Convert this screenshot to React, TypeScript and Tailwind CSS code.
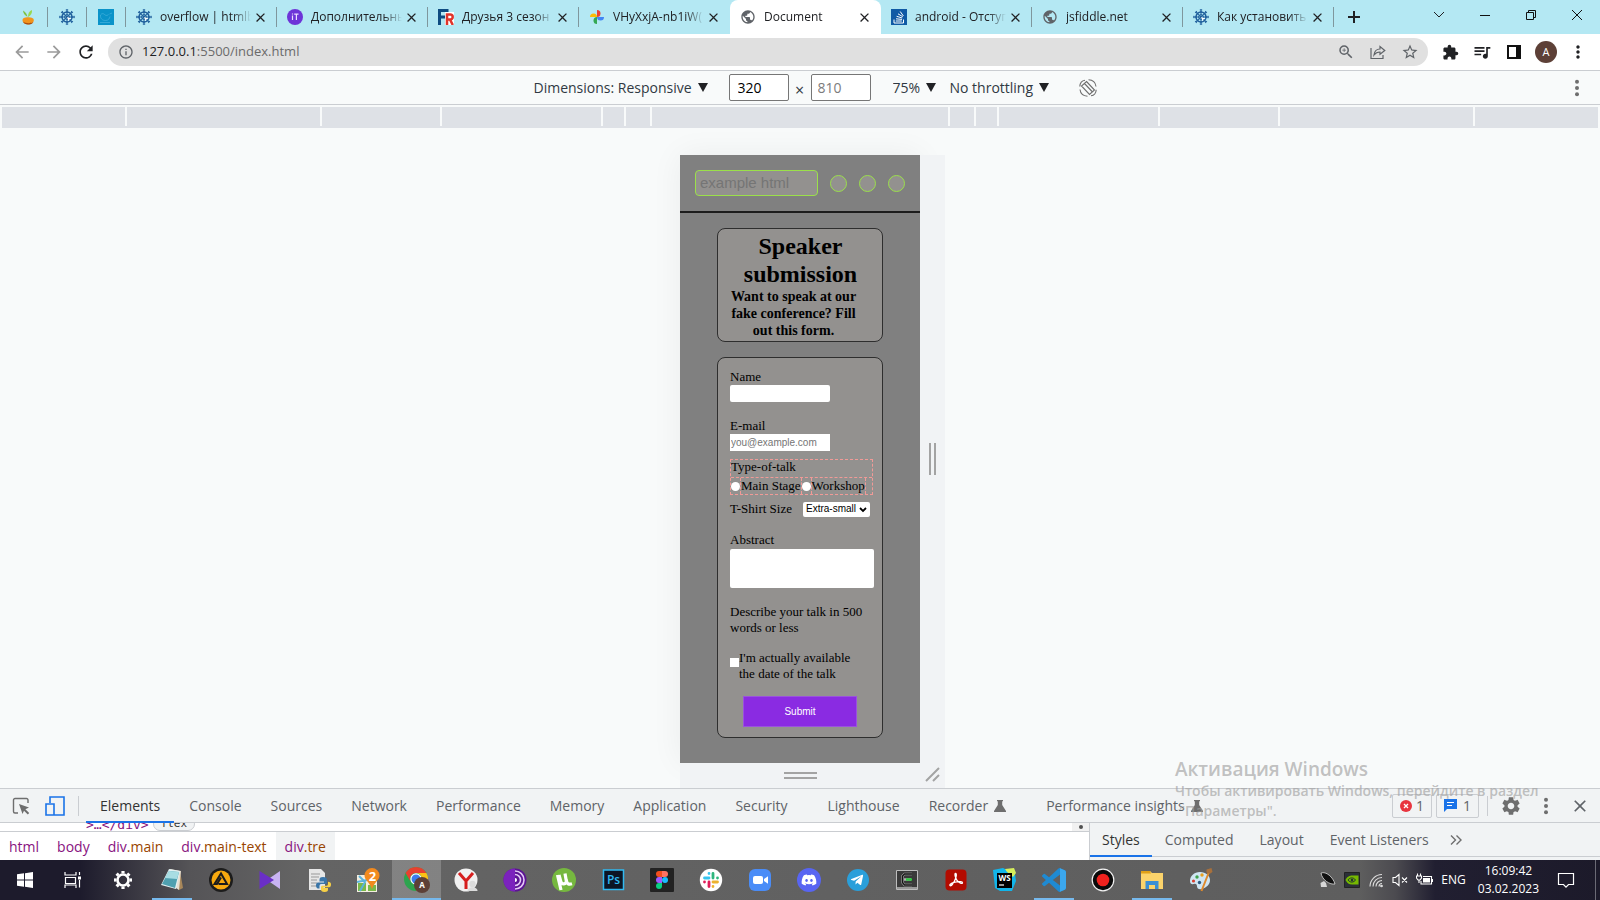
import type { ReactNode } from "react";
import {
  MdArrowBack,
  MdArrowForward,
  MdClose,
  MdExtension,
  MdInfoOutline,
  MdMoreVert,
  MdPublic,
  MdQueueMusic,
  MdRefresh,
  MdSettings,
  MdStarBorder,
  MdZoomIn,
} from "react-icons/md";
import { FaDiscord, FaTelegramPlane } from "react-icons/fa";

/* ---------- favicons ---------- */

function Sprout() {
  return (
    <svg viewBox="0 0 16 16" className="size-4">
      <path d="M7.500 9C7.500 6 6 3 3 1.500 3.200 4.500 5 6.500 7 7.500z" fill="#7fc241" />
      <path d="M8 8c0-3.500 1.200-6 4-7 .3 3-1 5.500-4 7z" fill="#9ad84f" />
      <path d="M2.500 11.300c0-2.300 2.500-3 5.500-3s5.800.7 5.800 3-2.800 4.200-5.800 4.200-5.500-1.900-5.500-4.200z" fill="#f2941c" />
      <path d="M3 12.800c2 1.500 8 2 10.300.2-.8 1.800-2.800 2.600-5.300 2.600s-4.300-1.200-5-2.800z" fill="#a94d10" />
    </svg>
  );
}

function Helm() {
  const spokes = [0, 45, 90, 135, 180, 225, 270, 315];
  return (
    <svg viewBox="0 0 16 16" className="size-4" fill="none" stroke="#1f5f9c">
      <circle cx="8" cy="8" r="5" strokeWidth="1.500" />
      <circle cx="8" cy="8" r="2.400" strokeWidth="1" />
      {spokes.map((a) => (
        <path key={a} d="M8 8V.4M6.800 .9h2.400M7 3h2" strokeWidth="1" transform={`rotate(${a} 8 8)`} />
      ))}
      <path d="M8 8l4.500 1.500-2 .8-.7 2z" fill="#fff" stroke="none" />
    </svg>
  );
}

function Whale() {
  return (
    <svg viewBox="0 0 16 16" className="size-4">
      <path fill="#0a93c9" d="M0 0h16v16H0z" />
      <path d="M2.500 6c-.5 3.500 2 5.500 5 5.500s4-2 4.500-4M2.500 6c1.500-2 3-1.500 4-.5S9 7 10.500 5.500M11.500 5l2.500-1M2 13.500h10" fill="none" stroke="#45b2dc" strokeWidth=".7" />
    </svg>
  );
}

function ItBadge() {
  return (
    <svg viewBox="0 0 16 16" className="size-4">
      <circle cx="8" cy="8" r="8" fill="#6d34d8" />
      <path d="M5.500 6.500V11M5.500 4.500v1M7.200 5.200h4.300M9.400 5.200V11" stroke="#e9dcff" strokeWidth="1.200" />
    </svg>
  );
}

function FrBadge() {
  return (
    <svg viewBox="0 0 16 16" className="size-4">
      <path fill="#fff" d="M7 3h9v13H7z" />
      <path d="M1.500 16V1.500H10.500M1.500 8H7" fill="none" stroke="#0f4c81" strokeWidth="3" />
      <path d="M9 16V5.500h3.200a2.300 2.300 0 0 1 0 5H9M12 10.500l2.800 5.500" fill="none" stroke="#e0342b" strokeWidth="2.500" />
    </svg>
  );
}

function Photos() {
  return (
    <svg viewBox="0 0 16 16" className="size-4">
      <path d="M8 1a3.500 3.500 0 0 1 0 7z" fill="#ea4335" />
      <path d="M1 8a3.500 3.500 0 0 1 7 0z" fill="#fbbc04" />
      <path d="M15 8a3.500 3.500 0 0 1-7 0z" fill="#4285f4" />
      <path d="M8 15a3.500 3.500 0 0 1 0-7z" fill="#34a853" />
    </svg>
  );
}

function StackBadge() {
  return (
    <svg viewBox="0 0 16 16" className="size-4">
      <path fill="#0f5aa5" d="M0 0h16v16H0z" />
      <path d="M3 10.500V14h9.500v-3.500M4.800 12h6M5 9.800l6 .6M5.600 7.300l5.600 1.700M7 4.800l4.800 3M9.200 2.500l3.200 4.500" fill="none" stroke="#fff" strokeWidth="1" />
    </svg>
  );
}

function Globe() {
  return <MdPublic className="size-4 text-[#5f6368]" />;
}

/* ---------- browser chrome ---------- */

type Tab = { icon: ReactNode; title: string; active?: boolean; divider?: boolean };

const pinned: { icon: ReactNode; name: string; first?: boolean }[] = [
  { icon: <Sprout />, name: "Sprout", first: true },
  { icon: <Helm />, name: "htmlbook" },
  { icon: <Whale />, name: "Whale" },
];

const tabs: Tab[] = [
  { icon: <Helm />, title: "overflow | htmlb", divider: true },
  { icon: <ItBadge />, title: "Дополнительны", divider: true },
  { icon: <FrBadge />, title: "Друзья 3 сезон", divider: true },
  { icon: <Photos />, title: "VHyXxjA-nb1iW(" },
  { icon: <Globe />, title: "Document", active: true },
  { icon: <StackBadge />, title: "android - Отступ", divider: true },
  { icon: <Globe />, title: "jsfiddle.net", divider: true },
  { icon: <Helm />, title: "Как установить", divider: true },
];

function TabStrip() {
  return (
    <header className="flex h-[34px] bg-[#b4e8f3] text-[#202124]">
      {pinned.map((p) => (
        <button
          key={p.name}
          aria-label={p.name}
          className={`flex shrink-0 items-center justify-end pr-3 ${p.first ? "w-12" : "w-[39px]"}`}
        >
          {p.icon}
          <span className="-mr-3 ml-[11px] h-5 w-px bg-[#7f979d]" />
        </button>
      ))}
      {tabs.map((t) => (
        <div
          key={t.title}
          className={`flex h-full w-[151px] min-w-0 items-center pl-[10px] ${t.active ? "rounded-t-lg bg-white" : ""}`}
        >
          <button className="flex min-w-0 flex-1 items-center gap-2 text-left">
            <span className="shrink-0">{t.icon}</span>
            <span className="w-[91px] overflow-hidden text-xs whitespace-nowrap [mask-image:linear-gradient(to_right,black_80%,transparent)]">
              {t.title}
            </span>
          </button>
          <button aria-label={`Close ${t.title}`} className="mr-2 shrink-0">
            <MdClose className="size-[15px]" />
          </button>
          <span className={`h-5 w-px shrink-0 ${t.divider ? "bg-[#7f979d]" : ""}`} />
        </div>
      ))}
      <button aria-label="New tab" className="ml-[14px] flex items-center">
        <svg viewBox="0 0 12 12" className="size-3" stroke="#202124" strokeWidth="2">
          <path d="M6 0v12M0 6h12" />
        </svg>
      </button>
      <div className="ml-auto flex h-[29px] items-center" role="group" aria-label="Window">
        <button aria-label="Search tabs" className="flex w-[46px] justify-center">
          <svg viewBox="0 0 12 12" className="size-3" fill="none" stroke="#202124">
            <path d="M1 3l5 5 5-5" />
          </svg>
        </button>
        <button aria-label="Minimize" className="flex w-[46px] justify-center">
          <svg viewBox="0 0 12 12" className="size-3" fill="none" stroke="#111">
            <path d="M1 6.500h10" />
          </svg>
        </button>
        <button aria-label="Restore" className="flex w-[46px] justify-center">
          <svg viewBox="0 0 12 12" className="size-3" fill="none" stroke="#111">
            <path d="M1.500 3.500h7v7h-7zM3.500 3.500v-2h7v7h-2" />
          </svg>
        </button>
        <button aria-label="Close window" className="flex w-[46px] justify-center">
          <svg viewBox="0 0 12 12" className="size-3" fill="none" stroke="#111">
            <path d="M1 1l10 10M11 1L1 11" />
          </svg>
        </button>
      </div>
    </header>
  );
}

function IconCell({ label, children }: { label: string; children: ReactNode }) {
  return (
    <button aria-label={label} className="flex w-8 shrink-0 items-center justify-center">
      {children}
    </button>
  );
}

function AddressBar() {
  return (
    <div className="flex h-9 items-center bg-white pl-[6px] text-[#202124]">
      <IconCell label="Back">
        <MdArrowBack className="size-5 text-[#9b9b9b]" />
      </IconCell>
      <IconCell label="Forward">
        <MdArrowForward className="size-5 text-[#9b9b9b]" />
      </IconCell>
      <IconCell label="Reload">
        <MdRefresh className="size-5" />
      </IconCell>
      <div className="ml-[6px] flex h-7 flex-1 items-center rounded-full bg-[#e0e0e0] pr-[2px] pl-[10px] text-[#5f6368]">
        <MdInfoOutline className="size-4" />
        <a href="http://127.0.0.1:5500/index.html" className="ml-2 flex-1 text-[13px] text-[#6b6b6b]">
          <span className="text-[#202124]">127.0.0.1</span>:5500/index.html
        </a>
        <IconCell label="Zoom">
          <MdZoomIn className="size-[18px]" />
        </IconCell>
        <IconCell label="Share">
          <svg viewBox="0 0 16 16" className="size-4" fill="none" stroke="currentColor" strokeWidth="1.200">
            <path d="M1 4v10.500h12V11M4 11c.5-4 2.500-6 6-6V2.500L14.800 6.500 10 10.300V8C7 8 5.500 9 4 11z" />
          </svg>
        </IconCell>
        <IconCell label="Bookmark">
          <MdStarBorder className="size-[18px]" />
        </IconCell>
      </div>
      <div className="flex pr-[6px] pl-[6px]">
        <IconCell label="Extensions">
          <MdExtension className="size-[17px]" />
        </IconCell>
        <IconCell label="Media">
          <MdQueueMusic className="size-5" />
        </IconCell>
        <IconCell label="Side panel">
          <svg viewBox="0 0 14 14" className="size-[14px]">
            <path d="M1 1h12v12H1z" fill="none" stroke="#111" strokeWidth="2" />
            <path d="M9 1h4v12H9z" fill="#111" />
          </svg>
        </IconCell>
        <IconCell label="Profile">
          <span className="flex size-[22px] items-center justify-center rounded-full bg-[#5d4037] text-[11px] text-white">A</span>
        </IconCell>
        <IconCell label="Menu">
          <MdMoreVert className="size-5" />
        </IconCell>
      </div>
    </div>
  );
}

/* ---------- responsive toolbar ---------- */

function Picker({ label, value }: { label: string; value: string }) {
  return (
    <span className="relative flex items-center">
      <select aria-label={label} className="appearance-none bg-transparent pr-[15px] outline-none">
        <option>{value}</option>
      </select>
      <svg viewBox="0 0 10 9" className="pointer-events-none absolute right-0 h-[9px] w-[10px]" fill="#202124">
        <path d="M0 0h10L5 9z" />
      </svg>
    </span>
  );
}

function DeviceToolbar() {
  return (
    <div className="flex h-[35px] items-center border-y border-[#cacdd1] bg-[#f8fafa] text-sm text-[#303942]">
      <div className="flex flex-1 items-center justify-center pl-[63px]">
        <Picker label="Device" value="Dimensions: Responsive" />
        <input
          aria-label="Width"
          defaultValue="320"
          className="ml-[21px] h-[27px] w-[60px] rounded-xs border border-[#767676] bg-white px-2 text-black outline-none"
        />
        <span className="w-[22px] pt-1 text-center text-base">×</span>
        <input
          aria-label="Height"
          placeholder="810"
          className="mr-[22px] h-[27px] w-[60px] rounded-xs border border-[#767676] bg-white px-[6px] placeholder:text-[#7c7c7c] outline-none"
        />
        <Picker label="Zoom level" value="75%" />
        <span className="w-[14px]" />
        <Picker label="Throttling" value="No throttling" />
        <button aria-label="Rotate" className="ml-[30px]">
          <svg viewBox="0 0 18 18" className="size-[18px]" fill="none" stroke="#6e6e6e" strokeWidth="1.100">
            <path d="M7.500 2.500l8 8.500-5 4.500-8-8.500zM6 1.200C3 1.500 1 4 .8 7.500M9.500 .8C13.500 1 16.500 3.500 17 7.500M12 16.800c3-.3 5-2.500 5.200-6M8.500 17.200C4.500 17 1.500 14.500 1 10.500M5.500 4.500l8 8.500" />
          </svg>
        </button>
      </div>
      <button aria-label="More options" className="mr-[13px]">
        <svg viewBox="0 0 20 20" className="size-5" fill="#6e6e6e">
          <circle cx="10" cy="3.800" r="2" />
          <circle cx="10" cy="10" r="2" />
          <circle cx="10" cy="16.200" r="2" />
        </svg>
      </button>
    </div>
  );
}

function Ruler() {
  const bar = "h-[19px] bg-[#dee1e6]";
  return (
    <div className="bg-[#f8fafa] px-[2px] pt-[2px]">
      <div className="flex gap-[2px] border-b-2 border-[#dee1e6]">
        <div className={`${bar} flex-1`} />
        <div className={`${bar} w-[193px]`} />
        <div className={`${bar} w-[118px]`} />
        <div className={`${bar} w-[159px]`} />
        <div className={`${bar} w-[21px]`} />
        <div className={`${bar} w-[24px]`} />
        <div className={`${bar} w-[296px]`} />
        <div className={`${bar} w-[24px]`} />
        <div className={`${bar} w-[21px]`} />
        <div className={`${bar} w-[159px]`} />
        <div className={`${bar} w-[118px]`} />
        <div className={`${bar} w-[193px]`} />
        <div className={`${bar} flex-1`} />
      </div>
    </div>
  );
}

/* ---------- page shown inside the device frame ---------- */

function ConferencePage() {
  const card = "rounded-lg border border-[#2e2e2e] bg-[#93918f]";
  return (
    <div className="w-[240px] bg-[#808080] pb-[25px] font-['Liberation_Serif',serif] text-black">
      <div className="flex h-[58px] items-center gap-3 border-b-2 border-[#1c1c1c] px-[15px]">
        <input
          aria-label="Site"
          placeholder="example html"
          className="h-[26px] w-[123px] rounded border border-[#9be04a] bg-[#93918f] px-1 pb-px font-['Liberation_Sans',sans-serif] text-[15px] outline-none placeholder:text-[#757575]"
        />
        <span className="size-[17px] rounded-full border border-[#9be04a] bg-[#93918f]" />
        <span className="size-[17px] rounded-full border border-[#9be04a] bg-[#93918f]" />
        <span className="size-[17px] rounded-full border border-[#9be04a] bg-[#93918f]" />
      </div>

      <section className={`${card} mx-[37px] mt-[15px] pt-[3px] pr-[25px] pb-[2px] pl-3 text-center`}>
        <h1 className="-mr-[14px] text-2xl leading-7 font-bold">
          Speaker
          <br />
          submission
        </h1>
        <p className="text-sm leading-[17px] font-bold whitespace-nowrap">
          Want to speak at our
          <br />
          fake conference? Fill
          <br />
          out this form.
        </p>
      </section>

      <form
        className={`${card} mx-[37px] mt-[15px] flex flex-col pt-[11px] pr-2 pb-[10px] pl-3 text-[13px] leading-4`}
        onSubmit={(e) => e.preventDefault()}
      >
        <label htmlFor="name">Name</label>
        <input id="name" className="h-[17px] w-[100px] rounded-xs bg-white px-[2px] font-['Liberation_Sans',sans-serif] text-[10px] outline-none" />

        <label htmlFor="email" className="mt-4">
          E-mail
        </label>
        <input
          id="email"
          type="email"
          placeholder="you@example.com"
          className="h-[17px] w-[100px] bg-white px-px font-['Liberation_Sans',sans-serif] text-[10px] outline-none placeholder:text-[#757575]"
        />

        <fieldset aria-labelledby="talk-type" className="mt-2 h-9 w-[143px] border border-dashed border-[#f19a97]">
          <div id="talk-type" className="-mt-px h-[19px] border-b border-dashed border-[#f19a97]">
            Type-of-talk
          </div>
          <div className="flex items-center whitespace-nowrap">
            <input id="main" type="radio" name="talk" className="size-[9px] shrink-0 appearance-none rounded-full bg-white" />
            <label htmlFor="main" className="border-x border-dashed border-[#f19a97]">
              Main Stage
            </label>
            <input id="workshop" type="radio" name="talk" className="size-[9px] shrink-0 appearance-none rounded-full bg-white" />
            <label htmlFor="workshop" className="border-x border-dashed border-[#f19a97]">
              Workshop
            </label>
          </div>
        </fieldset>

        <div className="mt-[6px] flex items-center justify-between">
          <label htmlFor="size">T-Shirt Size</label>
          <span className="relative mr-1 flex">
            <select
              id="size"
              className="h-[15px] w-[67px] appearance-none rounded-xs bg-white pl-[3px] font-['Liberation_Sans',sans-serif] text-[10px] leading-3 outline-none"
            >
              <option>Extra-small</option>
            </select>
            <svg viewBox="0 0 8 6" className="pointer-events-none absolute top-[5px] right-[3px] h-[6px] w-2" fill="none" stroke="#000" strokeWidth="1.800">
              <path d="M1 1l3 3 3-3" />
            </svg>
          </span>
        </div>

        <label htmlFor="abstract" className="mt-[15px]">
          Abstract
        </label>
        <textarea id="abstract" className="mt-px h-[39px] w-full resize-none rounded-xs bg-white p-[2px] font-['Liberation_Sans',sans-serif] text-[10px] outline-none" />
        <p className="mt-4 whitespace-nowrap">
          Describe your talk in 500
          <br />
          words or less
        </p>

        <div className="mt-[14px] flex items-start">
          <input id="available" type="checkbox" className="mt-2 size-[9px] shrink-0 appearance-none bg-white" />
          <label htmlFor="available" className="whitespace-nowrap">
            I'm actually available
            <br />
            the date of the talk
          </label>
        </div>

        <button type="submit" className="mt-[14px] mr-[17px] ml-[13px] h-[31px] border border-[#9a52dd] bg-[#8a2be2] font-['Liberation_Sans',sans-serif] text-[10px] text-white">
          Submit
        </button>
      </form>
    </div>
  );
}

function Viewport() {
  return (
    <main className="flex flex-1 justify-center bg-[#f8fafa] pt-[27px]">
      <div className="ml-[25px] flex flex-col bg-[#f1f3f5]">
        <div className="flex">
          <div className="shadow-[0_0_30px_rgba(0,0,0,0.06)]">
            <ConferencePage />
          </div>
          <div className="relative flex w-[25px] items-center justify-center gap-[3px] bg-[#f1f3f5]">
            <span className="h-8 w-[2px] bg-[#a3a3a3]" />
            <span className="h-8 w-[2px] bg-[#a3a3a3]" />
          </div>
        </div>
        <div className="relative flex h-[25px] items-center bg-[#f1f3f5]">
          <div className="flex flex-1 flex-col items-center gap-[3px]">
            <span className="h-[2px] w-[33px] bg-[#a3a3a3]" />
            <span className="h-[2px] w-[33px] bg-[#a3a3a3]" />
          </div>
          <svg viewBox="0 0 25 25" className="size-[25px]" stroke="#a3a3a3" strokeWidth="2">
            <path d="M6 18L19 5M13 18l6-6" />
          </svg>
        </div>
      </div>
    </main>
  );
}

/* ---------- developer tools ---------- */

const panels = [
  { name: "Elements", active: true },
  { name: "Console" },
  { name: "Sources" },
  { name: "Network" },
  { name: "Performance" },
  { name: "Memory" },
  { name: "Application" },
  { name: "Security" },
  { name: "Lighthouse", gap: true },
  { name: "Recorder", flask: true },
  { name: "Performance insights", flask: true, gap: true },
];

const crumbs = [
  { tag: "html", cls: "" },
  { tag: "body", cls: "" },
  { tag: "div", cls: ".main" },
  { tag: "div", cls: ".main-text" },
  { tag: "div", cls: ".tre" },
];

function DevTools() {
  return (
    <section className="text-sm text-[#5f6368]">
      <div className="flex h-[35px] items-center border-y border-[#cacdd1] bg-[#f1f3f4]">
        <button aria-label="Inspect" className="ml-3">
          <svg viewBox="0 0 18 18" className="size-[18px]">
            <path d="M16 6V3a1.500 1.500 0 0 0-1.500-1.500H3A1.500 1.500 0 0 0 1.500 3v11.500A1.500 1.500 0 0 0 3 16h3" fill="none" stroke="#6e6e6e" strokeWidth="1.400" />
            <path d="M7 7l10 3.600-3.600 1.700 3.800 3.800-1.400 1.400-3.800-3.800L10.500 17z" fill="#6e6e6e" />
          </svg>
        </button>
        <button aria-label="Toggle device toolbar" className="ml-[15px]">
          <svg viewBox="0 0 20 20" className="size-5" fill="none" stroke="#1a73e8" strokeWidth="1.600">
            <path d="M5 7V1h14v18H9M1 8h8v11H1z" />
          </svg>
        </button>
        <span className="mr-[7px] ml-[13px] h-5 w-px bg-[#cacdd1]" />
        <nav className="flex self-stretch">
          {panels.map((p) => (
            <button
              key={p.name}
              className={`flex items-center gap-[6px] pr-[14px] pt-px whitespace-nowrap ${
                p.active ? "-mb-px border-b-2 border-[#1a73e8] text-[#333]" : "ml-px"
              } ${p.gap ? "pl-[25px]" : "pl-[14px]"}`}
            >
              {p.name}
              {p.flask && (
                <svg viewBox="0 0 12 12" className="size-3" fill="#6e6e6e">
                  <path d="M3 0h6v1.300H8.200V5L12 11v1H0v-1l3.800-6V1.300H3z" />
                </svg>
              )}
            </button>
          ))}
        </nav>
        <div className="ml-auto flex items-center">
          <button className="flex h-6 items-center gap-1 rounded-xs border border-[#cacdd1] px-[7px]">
            <svg viewBox="0 0 12 12" className="size-3">
              <circle cx="6" cy="6" r="6" fill="#e8353f" />
              <path d="M4 4l4 4M8 4L4 8" stroke="#fff" strokeWidth="1.300" />
            </svg>
            1
          </button>
          <button className="ml-1 flex h-6 items-center gap-[6px] rounded-xs border border-[#cacdd1] px-[7px]">
            <svg viewBox="0 0 13 13" className="size-[13px]">
              <path d="M0 0h13v10H3l-3 3z" fill="#1a73e8" />
              <path d="M3 3.500h7M3 6.500h5" stroke="#fff" strokeWidth="1.200" />
            </svg>
            1
          </button>
          <span className="ml-2 h-5 w-px bg-[#cacdd1]" />
          <button aria-label="Settings" className="ml-3">
            <MdSettings className="size-[22px] text-[#6e6e6e]" />
          </button>
          <button aria-label="Customize" className="ml-[14px]">
            <svg viewBox="0 0 20 20" className="size-5" fill="#6e6e6e">
              <circle cx="10" cy="3.800" r="2" />
              <circle cx="10" cy="10" r="2" />
              <circle cx="10" cy="16.200" r="2" />
            </svg>
          </button>
          <button aria-label="Close tools" className="mr-[10px] ml-[14px]">
            <MdClose className="size-5 text-[#5f6368]" />
          </button>
        </div>
      </div>

      <div className="flex h-[37px] bg-white">
        <div className="flex min-w-0 flex-1 flex-col">
          <div className="flex h-[9px] items-end justify-between overflow-hidden border-b border-[#cacdd1]">
            <div className="flex items-end pl-[86px] font-['DejaVu_Sans_Mono',monospace] text-[13px] leading-[12px] text-[#881280]">
              {">…</div>"}
              <span className="ml-[4px] rounded-full border border-[#cacdd1] bg-[#f1f3f4] px-[7px] text-[11px] leading-3 text-[#333]">flex</span>
            </div>
            <div className="flex h-full w-[17px] items-center justify-center bg-[#f1f1f1]">
              <span className="size-1 rounded-full bg-[#505050]" />
            </div>
          </div>
          <nav className="flex flex-1 items-stretch">
            {crumbs.map((c) => (
              <a key={c.cls + c.tag} href={`#${c.tag}`} className="flex items-center px-[9px] pt-[2px] text-[#994500] last:bg-[#f1f3f4]">
                <span className="text-[#881280]">{c.tag}</span>
                {c.cls}
              </a>
            ))}
          </nav>
        </div>
        <aside className="w-[511px] border-l border-[#cacdd1] bg-[#f1f3f4]">
          <nav className="flex h-[34px] items-stretch border-b border-[#cacdd1]">
            <button className="-mb-px border-b-2 border-[#1a73e8] px-3 pt-[2px] text-[#333]">Styles</button>
            <button className="px-[13px]">Computed</button>
            <button className="px-[13px]">Layout</button>
            <button className="px-[13px]">Event Listeners</button>
            <button aria-label="More panes" className="px-2">
              <svg viewBox="0 0 12 12" className="size-3" fill="none" stroke="#6e6e6e" strokeWidth="1.400">
                <path d="M1 1.500L5.500 6 1 10.500M6.500 1.500L11 6l-4.500 4.500" />
              </svg>
            </button>
          </nav>
        </aside>
      </div>
    </section>
  );
}

/* ---------- taskbar ---------- */

const S = "size-6";

const apps: { name: string; icon: ReactNode; state?: "open" | "front" }[] = [
  {
    name: "Start",
    icon: (
      <svg viewBox="0 0 24 24" className={S} fill="#fff">
        <path d="M4 6.300l7-1v6.300H4zM12 5.200L20 4v7.600h-8zM4 12.500h7v6.300l-7-1zM12 12.500h8V20l-8-1.200z" />
      </svg>
    ),
  },
  {
    name: "Task view",
    icon: (
      <svg viewBox="0 0 24 24" className={S} fill="none" stroke="#fff" strokeWidth="1.200">
        <path d="M3 4v3h11V4M3.500 9.500h10v6h-10zM3 20v-3h11v3M17.500 4v3M17.500 12v7.500" />
        <path d="M16 8.500h3v3h-3z" fill="#fff" stroke="none" />
      </svg>
    ),
  },
  {
    name: "Settings",
    icon: (
      <svg viewBox="0 0 24 24" className={S} fill="none" stroke="#fff">
        <circle cx="12" cy="12" r="5.500" strokeWidth="2.600" />
        {[0, 45, 90, 135, 180, 225, 270, 315].map((a) => (
          <path key={a} d="M12 5.500V3" strokeWidth="3.200" transform={`rotate(${a} 12 12)`} />
        ))}
      </svg>
    ),
  },
  {
    name: "Notepad",
    state: "open",
    icon: (
      <svg viewBox="0 0 24 24" className={S}>
        <path d="M20 3l3 17-4 2-2-3z" fill="#a8875a" />
        <path d="M10 1l11 2-2 19-3-2z" fill="#e6ded0" />
        <path d="M9 1l11 2-4 18L1 17z" fill="#e3f1f3" />
        <path d="M9 3l10 1-4 16-13-4z" fill="#4fa0b0" />
        <path d="M9 3l10 1-2 7-12-1z" fill="#a8dde3" />
      </svg>
    ),
  },
  {
    name: "AIMP",
    icon: (
      <svg viewBox="0 0 24 24" className={S}>
        <circle cx="12" cy="12" r="12" fill="#1c1c1c" />
        <circle cx="12" cy="12" r="9.500" fill="#f7a90f" />
        <path d="M9.500 16H18L12 5.500 5.500 16H8L12 9.500" fill="none" stroke="#1c1c1c" strokeWidth="2" />
      </svg>
    ),
  },
  {
    name: "Kdenlive",
    icon: (
      <svg viewBox="0 0 24 24" className={S}>
        <path d="M22 3v18L9 12z" fill="#c8b3f2" />
        <path d="M1.500 3l14.500 9-14.500 9z" fill="#6a2fc7" />
      </svg>
    ),
  },
  {
    name: "Python",
    icon: (
      <svg viewBox="0 0 24 24" className={S}>
        <path d="M2 1h12l4 4v17H2z" fill="#e6e6e6" />
        <path d="M4 6h9M4 9h8M4 12h6M4 15h6M4 18h7" stroke="#999" />
        <path d="M16 9c-3 0-3.500 1-3.500 3v1.500H17v1h-6c-1.500 0-2 1.500-2 3s.8 3 2 3h1.500V18c0-1.500 1-2 2-2h4c1 0 1.500-.8 1.500-1.500V12c0-2-1-3-4-3z" fill="#3b76a8" />
        <path d="M17.500 24c3 0 3.500-1 3.500-2.500V20h-4.500v-.8H22c1.500 0 2-1.200 2-2.700 0-1.800-1-2.700-3-2.700V16c0 1.300-1 1.800-2 1.800h-3.500c-1 0-1.500.7-1.500 1.500V21.500c0 1.500 1 2.500 3.500 2.500z" fill="#f7d046" />
      </svg>
    ),
  },
  {
    name: "2GIS",
    icon: (
      <svg viewBox="0 0 24 24" className={S}>
        <path d="M1 7h20v17H1z" fill="#f3eee0" />
        <path d="M2 15h8v8H2zM12 17h8v6h-8z" fill="#7bb84a" />
        <path d="M3 8l6 6-5 9M1 14l10-2" stroke="#5ab3dd" strokeWidth="2" fill="none" />
        <path d="M16 0a7.500 7.500 0 0 1 7.500 7.500C23.500 12 19 13 16 21 13 13 8.500 12 8.500 7.500A7.500 7.500 0 0 1 16 0z" fill="#f28a1e" />
        <text x="16.500" y="12.500" textAnchor="middle" fontSize="13" fontWeight="700" fill="#fff">2</text>
      </svg>
    ),
  },
  {
    name: "Chrome",
    state: "front",
    icon: (
      <svg viewBox="0 0 26 26" className="size-[26px]">
        <circle cx="12" cy="12" r="12" fill="#2da44e" />
        <path d="M12 0A12 12 0 0 1 22.400 6H12a6 6 0 0 0-5.200 9L1.600 6A12 12 0 0 1 12 0z" fill="#e8402f" />
        <path d="M22.400 6A12 12 0 0 1 12 24l5.200-9A6 6 0 0 0 12 6z" fill="#fbc116" />
        <circle cx="12" cy="12" r="5.700" fill="#fff" />
        <circle cx="12" cy="12" r="4.500" fill="#3b7ded" />
        <circle cx="18" cy="18" r="8" fill="#5d4037" />
        <text x="18" y="21" textAnchor="middle" fontSize="8" fontWeight="700" fill="#fff">A</text>
      </svg>
    ),
  },
  {
    name: "Yandex",
    icon: (
      <svg viewBox="0 0 24 24" className={S}>
        <circle cx="12" cy="12" r="11.500" fill="#f1f1f1" />
        <path d="M5 5l7 8 7-8M12 12v9" fill="none" stroke="#d61f1f" strokeWidth="3" />
        <circle cx="18.500" cy="16" r="3.200" fill="#dcdcdc" />
        <path d="M13.500 23c0-5 10-5 10 0z" fill="#dcdcdc" />
      </svg>
    ),
  },
  {
    name: "Tor",
    icon: (
      <svg viewBox="0 0 24 24" className={S}>
        <circle cx="12" cy="12" r="11.500" fill="#5c1494" />
        <path d="M12 .5a11.500 11.500 0 0 0 0 23z" fill="#7b22bd" />
        <path d="M12 3a9 9 0 0 1 0 18M12 6.500a5.500 5.500 0 0 1 0 11" fill="none" stroke="#e3c8f5" strokeWidth="1.600" />
        <path d="M12 10a2 2 0 0 1 0 4z" fill="#fff" />
      </svg>
    ),
  },
  {
    name: "uTorrent",
    icon: (
      <svg viewBox="0 0 24 24" className={S}>
        <circle cx="12" cy="12" r="12" fill="#76b83f" />
        <path d="M5.500 7l3.500 15M7 7l1.800 6.500c1 3.500 5.500 3 5.500-.5L13 5.500M14.300 12c.5 4 2.500 4.800 5.700 3.800" fill="none" stroke="#fff" strokeWidth="3.200" />
      </svg>
    ),
  },
  {
    name: "Photoshop",
    icon: (
      <svg viewBox="0 0 24 24" className={S}>
        <path d="M2.500 2h20v19.500h-20z" fill="#0c1524" stroke="#31b9f0" strokeWidth="1.500" />
        <text x="12.500" y="16" textAnchor="middle" fontSize="12" fontWeight="600" fill="#31b9f0">Ps</text>
      </svg>
    ),
  },
  {
    name: "Figma",
    icon: (
      <svg viewBox="0 0 24 24" className={S}>
        <rect width="24" height="24" rx="1" fill="#222" />
        <path d="M12 3H9a3 3 0 0 0 0 6h3z" fill="#f24e1e" />
        <path d="M12 3h3a3 3 0 0 1 0 6h-3z" fill="#ff7262" />
        <path d="M12 9H9a3 3 0 0 0 0 6h3z" fill="#a259ff" />
        <circle cx="15" cy="12" r="3" fill="#1abcfe" />
        <path d="M12 15H9a3 3 0 1 0 3 3z" fill="#0acf83" />
      </svg>
    ),
  },
  {
    name: "Slack",
    icon: (
      <svg viewBox="0 0 24 24" className={S} strokeLinecap="round" strokeWidth="2.800">
        <circle cx="12" cy="12" r="11.200" fill="#fff" />
        <path d="M10 5.500v0M5.500 10H10" stroke="#36c5f0" />
        <path d="M14 5.500V10M18.500 10v0" stroke="#2eb67d" />
        <path d="M14 14h4.500M14 18.500v0" stroke="#ecb22e" />
        <path d="M10 14v4.500M5.500 14v0" stroke="#e01e5a" />
      </svg>
    ),
  },
  {
    name: "Zoom",
    icon: (
      <svg viewBox="0 0 24 24" className={S}>
        <rect x="1" y="1" width="22" height="22" rx="6" fill="#4a8cf7" />
        <rect x="5" y="8" width="10" height="8" rx="2" fill="#fff" />
        <path d="M16 11l4-2.800v7.600L16 13z" fill="#fff" />
      </svg>
    ),
  },
  {
    name: "Discord",
    icon: (
      <span className="flex size-6 items-center justify-center rounded-full bg-[#5865f2] text-white">
        <FaDiscord className="size-4" />
      </span>
    ),
  },
  {
    name: "Telegram",
    icon: (
      <span className="flex size-[22px] items-center justify-center rounded-full bg-[#2a9fda] text-white">
        <FaTelegramPlane className="mr-[2px] size-[14px]" />
      </span>
    ),
  },
  {
    name: "Console",
    icon: (
      <svg viewBox="0 0 24 24" className={S}>
        <path d="M1.500 2.500h21v19h-21z" fill="#3a3a3a" stroke="#bdbdbd" />
        <path d="M2 19h20v2H2z" fill="#999" />
        <path d="M17 6H9.500L7.500 8v6.500L9.500 17H17M9 11.500h7" fill="none" stroke="#b0b0b0" strokeWidth="2.400" />
        <path d="M17 6H9.500L7.500 8v6.500L9.500 17H17" fill="none" stroke="#151515" strokeWidth="1.400" />
        <path d="M11 11.500h6" stroke="#2ecc40" strokeWidth="2.400" />
      </svg>
    ),
  },
  {
    name: "Acrobat",
    icon: (
      <svg viewBox="0 0 24 24" className={S}>
        <rect x="1.500" y="1.500" width="21" height="21" rx="4" fill="#b30b00" />
        <path d="M11.500 5.500c1.500 0 .8 4-1 7.500-1.500 3-3.500 5.500-4.500 4.500-1-1.200 3-3.200 6.500-3.700 3-.5 6-.2 6 1 0 1.500-3.500.3-5.500-2.500-1.600-2.300-2.700-6.800-1.500-6.800z" fill="none" stroke="#fff" strokeWidth="1.300" />
      </svg>
    ),
  },
  {
    name: "WebStorm",
    icon: (
      <svg viewBox="0 0 24 24" className={S}>
        <path d="M0 2l10-2 6 3 6 3 1 7-4 10H7L2 20z" fill="#12b5ea" />
        <path d="M12 1l9-1 2 5-3 4-6-5z" fill="#d6ee5c" />
        <path d="M4 5h15v15H4z" fill="#000" />
        <text x="11.500" y="13" textAnchor="middle" fontSize="8" fontWeight="700" fill="#fff">WS</text>
        <path d="M6 17h5" stroke="#fff" strokeWidth="1.200" />
      </svg>
    ),
  },
  {
    name: "VS Code",
    state: "open",
    icon: (
      <svg viewBox="0 0 24 24" className={S}>
        <path
          fill="#1f8ad2"
          d="M23.150 2.587L18.210.210a1.494 1.494 0 0 0-1.705.290l-9.460 8.630-4.120-3.128a.999.999 0 0 0-1.276.057L.327 7.261A1 1 0 0 0 .326 8.740L3.899 12 .326 15.260a1 1 0 0 0 .001 1.479L1.650 17.940a.999.999 0 0 0 1.276.057l4.120-3.128 9.460 8.630a1.492 1.492 0 0 0 1.704.290l4.942-2.377A1.500 1.500 0 0 0 24 20.060V3.939a1.500 1.500 0 0 0-.850-1.352zm-5.146 14.861L10.826 12l7.178-5.448v10.896z"
        />
        <path d="M18 .2l5.200 2.400.8 1.400V20l-.8 1.400L18 23.800z" fill="#3ba7ee" />
      </svg>
    ),
  },
  {
    name: "Recorder",
    icon: (
      <svg viewBox="0 0 24 24" className={S}>
        <circle cx="12" cy="12" r="10.800" fill="#0a0a0a" stroke="#f2f2f2" strokeWidth="1.200" />
        <circle cx="12" cy="12" r="6.300" fill="#f0221e" />
      </svg>
    ),
  },
  {
    name: "Explorer",
    state: "open",
    icon: (
      <svg viewBox="0 0 24 24" className={S}>
        <path d="M1 3h9l2 2h11v16H1z" fill="#fbd36b" />
        <path d="M1 3h9l1 2.500H1z" fill="#e0a018" />
        <path d="M5.500 21v-8h13v8h-3.500v-4h-6v4z" fill="#3b8fd4" />
      </svg>
    ),
  },
  {
    name: "Paint",
    icon: (
      <svg viewBox="0 0 24 24" className={S}>
        <path d="M11 4C5 4 1 8 1 13c0 3 2 3.500 4 3s3 .5 3 2.500S10 22 13 21c5-1.500 8-5 8-9s-4-8-10-8z" fill="#cfe6f3" />
        <circle cx="4.500" cy="13" r="1.600" fill="#d8402f" />
        <circle cx="8" cy="9" r="1.700" fill="#3fa34d" />
        <circle cx="13" cy="7" r="1.700" fill="#e8a020" />
        <circle cx="10.500" cy="14.500" r="1.700" fill="#2d5a80" />
        <path d="M20 4L12.500 23" stroke="#e08a2c" strokeWidth="2" />
        <path d="M17.500 1.500L22.500 0l1 4-3 2-3-1.500z" fill="#a8703c" />
      </svg>
    ),
  },
];

function Taskbar() {
  return (
    <footer className="flex h-10 items-stretch bg-[linear-gradient(to_right,#1d1b2c_0,#1d1b2c_80px,#555457_190px,#646464_300px,#5e5e5e_calc(100%-240px),#4c4b50_calc(100%-205px),#211f31_calc(100%-165px),#1c1a2a_100%)] text-white">
      {apps.map((a) => (
        <button
          key={a.name}
          aria-label={a.name}
          className={`flex w-[49px] shrink-0 flex-col items-center ${a.state === "front" ? "bg-white/20" : ""}`}
        >
          <span className="flex flex-1 items-center pt-[2px]">{a.icon}</span>
          <span className={`h-[2px] ${a.state === "front" ? "w-full bg-[#76b9ed]" : a.state === "open" ? "w-10 bg-[#76b9ed]" : "w-10"}`} />
        </button>
      ))}
      <div className="ml-auto flex items-center gap-2">
        <svg viewBox="0 0 16 16" className="size-4">
          <path d="M1 1c5-2 12 4 14 11-5 1-13-4-14-11z" fill="#111" stroke="#ddd" strokeWidth=".8" />
          <path d="M4 9l-3.500 2L1 15h6l-1-4" fill="#d8d8d8" />
        </svg>
        <svg viewBox="0 0 16 16" className="size-4">
          <path d="M.5.500h15v15H.5z" fill="#2b3038" stroke="#222" />
          <path d="M1.500 8C3 4.500 6 3.500 8 3.500h6.500v9H8C5 12.500 3 11 1.500 8z" fill="#76b900" />
          <path d="M4 8c1.500-2.500 5.500-3 7.500 0-1.500 2.500-5.500 3-7.500 0z" fill="none" stroke="#233" />
          <circle cx="8" cy="8" r="1.300" fill="#233" />
        </svg>
        <svg viewBox="0 0 16 16" className="size-4" fill="none" stroke="#ddd" strokeWidth="1.100">
          <path d="M2 14.500A12 12 0 0 1 14 2.500M5 14.500A9 9 0 0 1 14 5.500M8 14.500a6 6 0 0 1 6-6M11 14.500a3 3 0 0 1 3-3" />
          <circle cx="13.500" cy="14" r=".8" fill="#fff" />
        </svg>
        <svg viewBox="0 0 16 16" className="size-4" fill="none" stroke="#fff" strokeWidth="1.100">
          <path d="M1 5.500h2.500L7 2.500v11L3.500 10.500H1zM10 5.500l5 5M15 5.500l-5 5" />
        </svg>
        <svg viewBox="0 0 17 16" className="h-4 w-[17px]" fill="none" stroke="#fff" strokeWidth="1.100">
          <path d="M7 4.500h8.500v7.500H5V9M16.500 7v3M1.500 1.500V4M4.500 1.500V4M.5 4h5v2L4 8H2L.5 6zM3 8v3" />
          <path d="M7 6h7v4.500H7z" fill="#fff" stroke="none" />
        </svg>
        <span className="text-xs">ENG</span>
      </div>
      <time className="ml-3 flex flex-col justify-center text-center text-xs leading-[18px]">
        <span>16:09:42</span>
        <span>03.02.2023</span>
      </time>
      <button aria-label="Notifications" className="mr-[20px] ml-[18px]">
        <svg viewBox="0 0 18 18" className="size-[18px]" fill="none" stroke="#fff" strokeWidth="1.200">
          <path d="M1.500 2.500h15v11h-5L9 16.200l-2.500-2.700h-5z" />
        </svg>
      </button>
      <span className="mr-1 w-px bg-[#6b6a75]" />
    </footer>
  );
}

export default function App() {
  return (
    <div className="relative flex min-h-screen flex-col overflow-hidden bg-white font-['Open_Sans','Noto_Sans',sans-serif]">
      <TabStrip />
      <AddressBar />
      <DeviceToolbar />
      <Ruler />
      <Viewport />
      <DevTools />
      <Taskbar />
      <div className="pointer-events-none absolute right-[66px] bottom-[79px] w-[359px] font-semibold whitespace-nowrap text-[#a0a0a0]/65">
        <p className="text-[19px] leading-6">Активация Windows</p>
        <p className="text-sm leading-5">Чтобы активировать Windows, перейдите в раздел</p>
        <p className="pl-1 text-sm leading-5">"Параметры".</p>
      </div>
    </div>
  );
}
